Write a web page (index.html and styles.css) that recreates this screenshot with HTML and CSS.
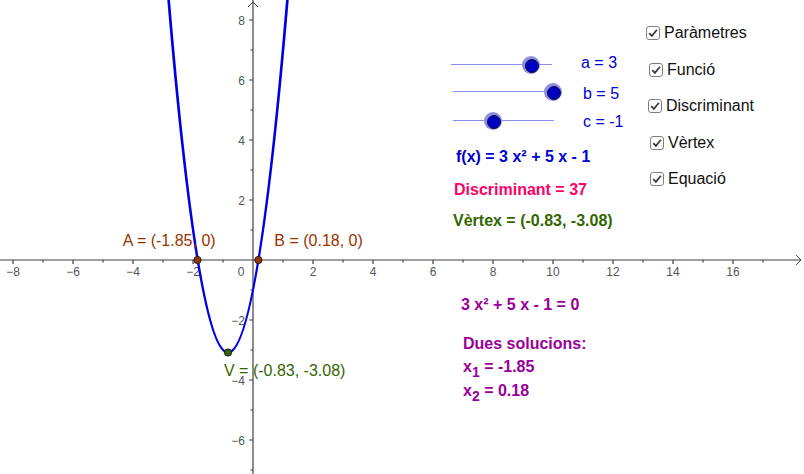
FILE: index.html
```html
<!DOCTYPE html>
<html lang="ca">
<head>
<meta charset="utf-8">
<title>Funció quadràtica</title>
<link rel="stylesheet" href="styles.css">
</head>
<body>
<div class="app">
  <svg class="canvas" width="804" height="474" viewBox="0 0 804 474" xmlns="http://www.w3.org/2000/svg">
    <g class="axes">
      <line x1="0" y1="260" x2="801" y2="260"/>
      <line x1="253" y1="0" x2="253" y2="474"/>
      <path class="arrow" d="M796 255L801 260L796 265"/>
      <path class="arrow" d="M248 7L253 2L258 7"/>
      <path d="M13 260v4M73 260v4M133 260v4M193 260v4M313 260v4M373 260v4M433 260v4M493 260v4M553 260v4M613 260v4M673 260v4M733 260v4"/>
      <path d="M43 260v2.5M103 260v2.5M163 260v2.5M223 260v2.5M283 260v2.5M343 260v2.5M403 260v2.5M463 260v2.5M523 260v2.5M583 260v2.5M643 260v2.5M703 260v2.5M763 260v2.5"/>
      <path d="M253 20h-4M253 80h-4M253 140h-4M253 200h-4M253 320h-4M253 380h-4M253 440h-4"/>
      <path d="M253 50h-2.5M253 110h-2.5M253 170h-2.5M253 230h-2.5M253 290h-2.5M253 350h-2.5M253 410h-2.5M253 470h-2.5"/>
    </g>
    <g class="ticklabels xlabels">
      <text x="13" y="276">−8</text>
      <text x="73" y="276">−6</text>
      <text x="133" y="276">−4</text>
      <text x="193" y="276">−2</text>
      <text x="241" y="276">0</text>
      <text x="313" y="276">2</text>
      <text x="373" y="276">4</text>
      <text x="433" y="276">6</text>
      <text x="493" y="276">8</text>
      <text x="553" y="276">10</text>
      <text x="613" y="276">12</text>
      <text x="673" y="276">14</text>
      <text x="733" y="276">16</text>
    </g>
    <g class="ticklabels ylabels">
      <text x="245" y="24.5">8</text>
      <text x="245" y="84.5">6</text>
      <text x="245" y="144.5">4</text>
      <text x="245" y="204.5">2</text>
      <text x="245" y="324.5">−2</text>
      <text x="245" y="384.5">−4</text>
      <text x="245" y="444.5">−6</text>
    </g>
    <path class="curve" d="M166 -31.9Q228.25 740 290.5 -38.125"/>
    <text class="ptlabel brown" x="122.7" y="246">A = (-1.85, 0)</text>
    <text class="ptlabel brown" x="274.3" y="246">B = (0.18, 0)</text>
    <text class="ptlabel green" x="224" y="376">V = (-0.83, -3.08)</text>
    <circle class="pt pt-brown" cx="197.5" cy="260" r="3.6"/>
    <circle class="pt pt-brown" cx="258.4" cy="260" r="3.6"/>
    <circle class="pt pt-green" cx="228" cy="352.5" r="3.6"/>
  </svg>

  <div class="slider slider-a"><span class="knob" style="left:79%"></span></div>
  <div class="slider slider-b"><span class="knob" style="left:100%"></span></div>
  <div class="slider slider-c"><span class="knob" style="left:40%"></span></div>
  <div class="txt blue pos-a">a = 3</div>
  <div class="txt blue pos-b">b = 5</div>
  <div class="txt blue pos-c">c = -1</div>

  <div class="txt bold blue pos-f">f(x) = 3 x² + 5 x - 1</div>
  <div class="txt bold pink pos-d">Discriminant = 37</div>
  <div class="txt bold green pos-v">Vèrtex = (-0.83, -3.08)</div>
  <div class="txt bold purple pos-eq">3 x² + 5 x - 1 = 0</div>
  <div class="txt bold purple pos-sol">Dues solucions:</div>
  <div class="txt bold purple pos-x1">x<span class="sub">1</span> = -1.85</div>
  <div class="txt bold purple pos-x2">x<span class="sub">2</span> = 0.18</div>

  <label class="check pos-c1"><span class="box"><svg viewBox="0 0 12 12" width="12" height="12"><path d="M2.2 6.1L4.9 8.9L9.9 2.8"/></svg></span>Paràmetres</label>
  <label class="check pos-c2"><span class="box"><svg viewBox="0 0 12 12" width="12" height="12"><path d="M2.2 6.1L4.9 8.9L9.9 2.8"/></svg></span>Funció</label>
  <label class="check pos-c3"><span class="box"><svg viewBox="0 0 12 12" width="12" height="12"><path d="M2.2 6.1L4.9 8.9L9.9 2.8"/></svg></span>Discriminant</label>
  <label class="check pos-c4"><span class="box"><svg viewBox="0 0 12 12" width="12" height="12"><path d="M2.2 6.1L4.9 8.9L9.9 2.8"/></svg></span>Vèrtex</label>
  <label class="check pos-c5"><span class="box"><svg viewBox="0 0 12 12" width="12" height="12"><path d="M2.2 6.1L4.9 8.9L9.9 2.8"/></svg></span>Equació</label>
</div>
</body>
</html>
```
FILE: styles.css
```css
* { box-sizing: border-box; }
html, body { margin: 0; padding: 0; background: #fff; }
body { font-family: "Liberation Sans", Arial, sans-serif; }

.app {
  position: relative;
  width: 804px;
  height: 474px;
  overflow: hidden;
  background: #fff;
}

.canvas { position: absolute; left: 0; top: 0; display: block; }

.axes line, .axes path {
  stroke: #404040;
  stroke-width: 1.2;
  fill: none;
}
.axes .arrow { stroke-width: 1; }

.ticklabels text {
  font-family: "Liberation Sans", Arial, sans-serif;
  font-size: 12px;
  fill: #555;
}
.xlabels text { text-anchor: middle; }
.ylabels text { text-anchor: end; }

.curve {
  fill: none;
  stroke: #0000e6;
  stroke-width: 2.7;
}

.ptlabel {
  font-family: "Liberation Sans", Arial, sans-serif;
  font-size: 16px;
}
.ptlabel.brown { fill: #993300; }
.ptlabel.green { fill: #336600; }

.pt { stroke: #1a1a1a; stroke-width: 1; }
.pt-brown { fill: #993300; }
.pt-green { fill: #336600; }

/* sliders */
.slider {
  position: absolute;
  height: 1px;
  background: #8c8cf0;
}
.slider-a { left: 451px; top: 64px; width: 101px; }
.slider-b { left: 453px; top: 91px; width: 100px; }
.slider-c { left: 453px; top: 120px; width: 101px; }

.knob {
  position: absolute;
  top: 0.5px;
  width: 18px;
  height: 18px;
  margin: -9px 0 0 -9px;
  border-radius: 50%;
  background: #8e8ee0;
}
.knob::after {
  content: "";
  position: absolute;
  left: 3px;
  top: 3px;
  width: 12px;
  height: 12px;
  border-radius: 50%;
  background: #0000c0;
  border: 1px solid #101040;
}

/* texts */
.txt {
  position: absolute;
  font-size: 16px;
  line-height: 16px;
  white-space: nowrap;
}
.bold { font-weight: bold; }
.blue { color: #0000cc; }
.pink { color: #ff0066; }
.green { color: #336600; }
.purple { color: #990099; }

.sub {
  font-size: 14px;
  position: relative;
  top: 5px;
}

.pos-a { left: 581px; top: 55px; }
.pos-b { left: 583px; top: 85.5px; }
.pos-c { left: 583px; top: 114px; }
.pos-f { left: 456px; top: 149px; }
.pos-d { left: 454px; top: 181.5px; }
.pos-v { left: 453px; top: 212.5px; }
.pos-eq { left: 461px; top: 297px; }
.pos-sol { left: 463px; top: 335.5px; }
.pos-x1 { left: 463px; top: 359px; }
.pos-x2 { left: 463px; top: 382.5px; }

/* checkboxes */
.check {
  position: absolute;
  display: flex;
  align-items: center;
  gap: 4px;
  font-size: 16px;
  line-height: 16px;
  color: #111;
  white-space: nowrap;
}
.box {
  width: 14px;
  height: 14px;
  border: 1.6px solid #808080;
  border-radius: 3px;
  display: flex;
  align-items: center;
  justify-content: center;
  background: #fff;
}
.box svg { display: block; }
.box path {
  fill: none;
  stroke: #3a3a3a;
  stroke-width: 1.7;
}

.pos-c1 { left: 646px; top: 25px; }
.pos-c2 { left: 649px; top: 62px; }
.pos-c3 { left: 648px; top: 98px; }
.pos-c4 { left: 650px; top: 135px; }
.pos-c5 { left: 650px; top: 170.5px; }
```
